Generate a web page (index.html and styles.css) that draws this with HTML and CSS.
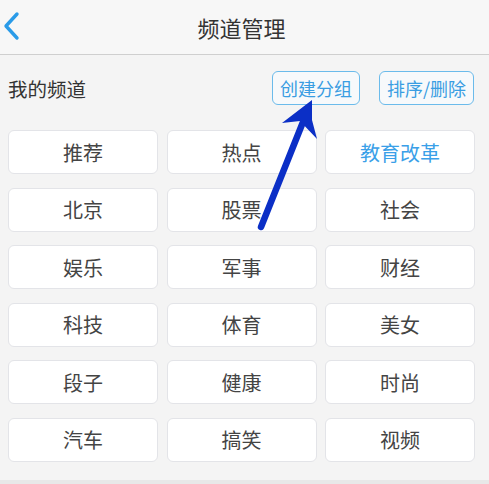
FILE: index.html
```html
<!DOCTYPE html>
<html lang="zh-CN">
<head>
  <meta charset="UTF-8" />
  <meta name="viewport" content="width=device-width, initial-scale=1.0"/>
  <title>频道管理</title>
  <link rel="stylesheet" href="styles.css">
</head>
<body>
  <div class="page">
    <!-- Top bar -->
    <div class="topbar">
      <a class="back" href="#">
        <svg width="20" height="30" viewBox="0 0 20 30">
          <polyline points="16,3 5,15 16,27" fill="none" stroke="#2a9be8" stroke-width="3.4" stroke-linecap="round" stroke-linejoin="round"/>
        </svg>
      </a>
      <h1>频道管理</h1>
    </div>

    <!-- My channels -->
    <div class="section-head">
      <span class="section-title">我的频道</span>
      <div class="actions">
        <button class="outline-btn">创建分组</button>
        <button class="outline-btn">排序/删除</button>
      </div>
    </div>

    <div class="channels">
      <div class="channel">推荐</div>
      <div class="channel">热点</div>
      <div class="channel active">教育改革</div>
      <div class="channel">北京</div>
      <div class="channel">股票</div>
      <div class="channel">社会</div>
      <div class="channel">娱乐</div>
      <div class="channel">军事</div>
      <div class="channel">财经</div>
      <div class="channel">科技</div>
      <div class="channel">体育</div>
      <div class="channel">美女</div>
      <div class="channel">段子</div>
      <div class="channel">健康</div>
      <div class="channel">时尚</div>
      <div class="channel">汽车</div>
      <div class="channel">搞笑</div>
      <div class="channel">视频</div>
    </div>

    <div class="bottom-strip"></div>

    <!-- pointer arrow drawn over the list -->
    <svg class="pointer" width="489" height="484" viewBox="0 0 489 484">
      <line x1="261" y1="227" x2="303" y2="122" stroke="#0b2fc6" stroke-width="6.5" stroke-linecap="round"/>
      <polygon points="312,100 282,123 300,121 317,139 312,120" fill="#0b2fc6"/>
    </svg>
  </div>
</body>
</html>
```

FILE: styles.css
```css
* {
  box-sizing: border-box;
}

body {
  margin: 0;
  background: #f4f4f4;
  font-family: "Noto Sans CJK SC", "Noto Sans", sans-serif;
  color: #333;
}

.page {
  position: relative;
  width: 489px;
  height: 484px;
  overflow: hidden;
}

.topbar {
  position: relative;
  height: 55px;
  padding-right: 6px;
  background: #f7f7f7;
  border-bottom: 1px solid #cfcfcf;
  display: flex;
  align-items: center;
  justify-content: center;
}

.topbar h1 {
  margin: 0;
  font-size: 22px;
  font-weight: 400;
  color: #333;
}

.back {
  position: absolute;
  left: 1px;
  top: 11px;
  display: block;
  width: 20px;
  height: 30px;
}

.section-head {
  height: 66px;
  display: flex;
  align-items: center;
  justify-content: space-between;
  padding: 0 15px 0 8px;
}

.section-title {
  font-size: 19.5px;
  color: #333;
}

.actions {
  display: flex;
  gap: 19px;
}

.outline-btn {
  height: 34px;
  padding: 0 7px;
  border: 1px solid #6bbbeb;
  border-radius: 6px;
  background: #f7f9fb;
  color: #3a9de2;
  font-family: inherit;
  font-size: 18px;
  line-height: 32px;
}

.channels {
  width: 475px;
  padding: 9px 0 0 8px;
  display: grid;
  grid-template-columns: repeat(3, 150px);
  column-gap: 8.5px;
  row-gap: 13.5px;
}

.channel {
  height: 44px;
  background: #fff;
  border: 1px solid #e3e4e8;
  border-radius: 6px;
  display: flex;
  align-items: center;
  justify-content: center;
  font-size: 20px;
  color: #444;
}

.channel.active {
  color: #3aa0e8;
}

.bottom-strip {
  position: absolute;
  left: 0;
  right: 0;
  bottom: 0;
  height: 4px;
  background: #e8e8e8;
}

.pointer {
  position: absolute;
  left: 0;
  top: 0;
  pointer-events: none;
}
```
